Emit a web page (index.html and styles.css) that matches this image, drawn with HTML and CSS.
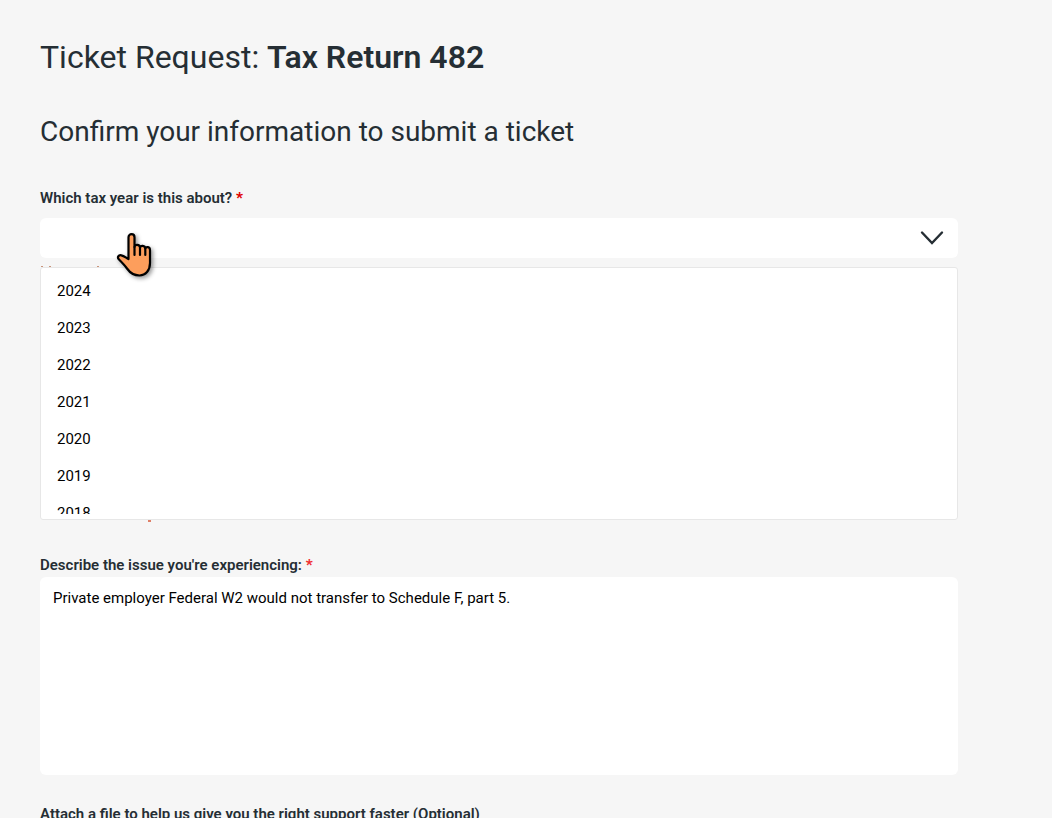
FILE: index.html
```html
<!DOCTYPE html>
<html lang="en">
<head>
<meta charset="utf-8">
<meta name="viewport" content="width=device-width, initial-scale=1">
<title>Ticket Request</title>
<link rel="stylesheet" href="styles.css">
</head>
<body>
<main class="page">
  <h1 class="title">Ticket Request: <strong class="strong">Tax Return 482</strong></h1>
  <h2 class="subtitle">Confirm your information to submit a ticket</h2>
  <form class="form">
    <div class="field year-field">
      <label class="label" for="year">Which tax year is this about? <span class="required">*</span></label>
      <div class="select-wrap">
        <select class="select" id="year" required><option value=""></option></select>
        <svg class="chevron" viewBox="0 0 24 16" aria-hidden="true"><path d="M2 2.5 12 13 22 2.5"/></svg>
        <div class="menu">
          <ul class="options" role="listbox" aria-label="Tax year">
            <li class="option" role="option">2024</li>
            <li class="option" role="option">2023</li>
            <li class="option" role="option">2022</li>
            <li class="option" role="option">2021</li>
            <li class="option" role="option">2020</li>
            <li class="option" role="option">2019</li>
            <li class="option" role="option">2018</li>
          </ul>
        </div>
        <svg class="pointer" viewBox="0 0 40 48" aria-hidden="true"><path d="M12.5 27V5.2C12.5 1.2 18.5 1.2 18.5 5.2V15C18.7 12.2 23.8 12.2 24 15.5C24.4 13.1 29.1 13.3 29.3 16.5C30 14.3 34 14.6 34 18V31C34 38.5 29.5 43.5 23.5 43.5C18.5 43.5 14.5 41.5 11 36.5C8.5 33 5.5 30 3 27.5C.8 25.3 2.5 22.8 5.3 23.3C8 23.8 10 25.7 12.5 27Z"/><path d="M18.5 15v8M24 15.5V23M29.3 16.5V23"/></svg>
      </div>
    </div>
    <div class="field issue-field">
      <label class="label" for="issue">Describe the issue you're experiencing: <span class="required soft">*</span></label>
      <textarea class="textarea" id="issue">Private employer Federal W2 would not transfer to Schedule F, part 5.</textarea>
    </div>
    <div class="field">
      <label class="label" for="file">Attach a file to help us give you the right support faster (Optional)</label>
      <input class="file" id="file" type="file">
    </div>
  </form>
</main>
</body>
</html>
```
FILE: styles.css
```css
* { box-sizing: border-box; }
body {
  margin: 0;
  height: 100vh;
  overflow: hidden;
  background: #f6f6f6;
  color: #252e34;
  font-family: Roboto, "Liberation Sans", sans-serif;
}
.page { padding: 32px 94px 0 40px; }
.title, .subtitle { margin: 0; font-weight: 400; white-space: nowrap; }
.title { font-size: 32px; line-height: 50px; }
.strong { font-weight: 600; }
.subtitle { margin-top: 26px; font-size: 28px; line-height: 48px; }
.form { padding-top: 32px; }
.label { display: block; font-size: 15px; line-height: 20px; font-weight: 600; }
.required { color: #e00000; font-weight: 900; }
.required.soft { color: #f03030; }
.select-wrap { position: relative; margin-top: 10px; }
.select {
  display: block;
  width: 100%;
  height: 40px;
  border: 0;
  border-radius: 6px;
  background: #fff;
  appearance: none;
}
.chevron {
  position: absolute;
  top: 12px;
  right: 14px;
  width: 24px;
  height: 16px;
  fill: none;
  stroke: #252e34;
  stroke-width: 2.4;
  stroke-linecap: round;
  pointer-events: none;
}
.menu {
  position: absolute;
  top: 49px;
  left: 0;
  right: 0;
  height: 253px;
  padding: 5px 0;
  border: 1px solid #e7e7e7;
  border-radius: 3px;
  background: #fff;
}
/* marks of the helper text that show past the menu's edges */
.menu::before, .menu::after { content: ""; position: absolute; height: 1px; }
.menu::before {
  top: -2px;
  left: 0;
  width: 58px;
  background: linear-gradient(90deg, #c9957c 2px, transparent 2px 8px, #c9957c 8px 10px, transparent 10px 56px, #c9957c 56px);
}
.menu::after {
  top: 252px;
  left: 107px;
  width: 3px;
  height: 2px;
  background: #df8068;
}
.options {
  height: 241px;
  margin: 0;
  padding: 0;
  overflow: hidden;
  list-style: none;
}
.option { padding: 0 16px; font-size: 15px; line-height: 37px; color: #000; }
.pointer {
  position: absolute;
  top: 14px;
  left: 76px;
  width: 40px;
  height: 48px;
  overflow: visible;
  fill: #fd9e5c;
  stroke: #000;
  stroke-width: 2.2;
  stroke-linecap: round;
  stroke-linejoin: round;
  filter: drop-shadow(2px 2px 2px #0006);
}
.issue-field { margin-top: 297px; }
.textarea {
  display: block;
  width: 100%;
  height: 198px;
  margin-top: 2px;
  padding: 11px 13px;
  border: 0;
  border-radius: 6px;
  background: #fff;
  color: #000;
  font: 15px/20px Roboto, "Liberation Sans", sans-serif;
  resize: none;
}
.issue-field + .field { margin-top: 29px; }
.file { margin-top: 10px; }
```
